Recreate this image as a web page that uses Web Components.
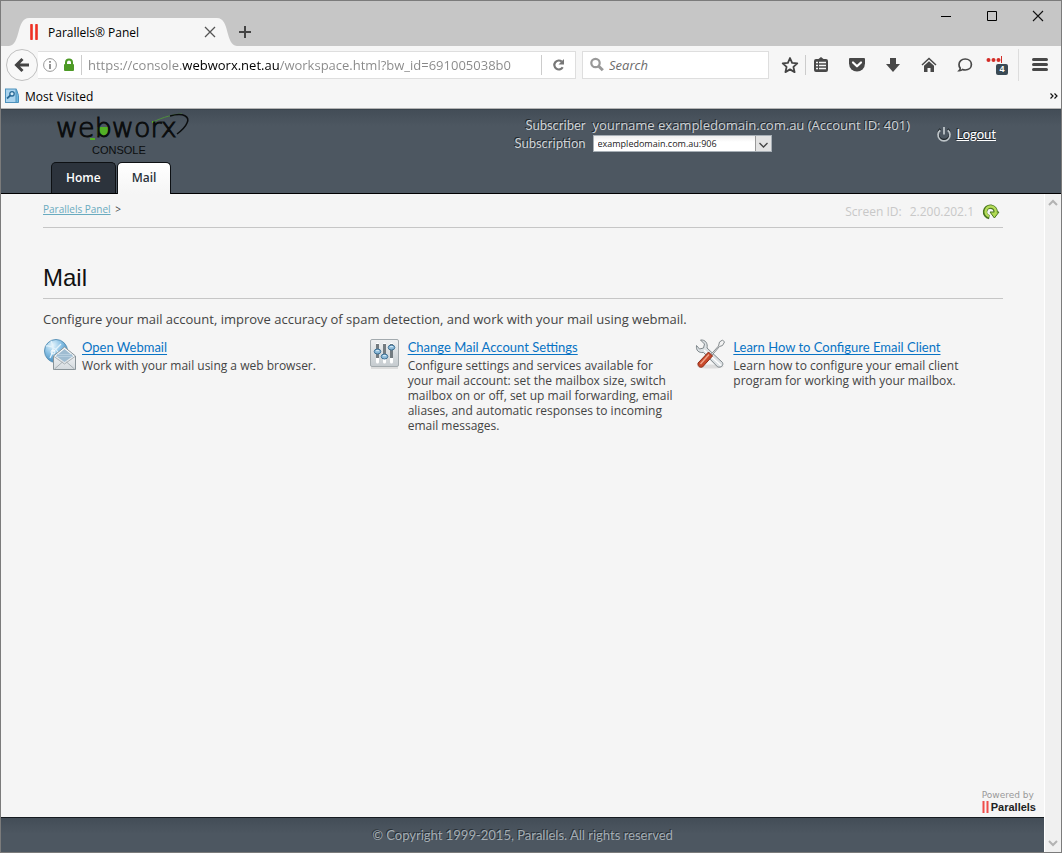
<!DOCTYPE html>
<html lang="en">
<head>
<meta charset="utf-8">
<title>Parallels® Panel</title>
<style>
  body {
    margin: 0;
    --lato: Lato, "Open Sans", sans-serif;
    font-family: "Open Sans", "Noto Sans", sans-serif;
    font-size: 12px;
    color: #444;
    background: #f5f5f5;
  }
</style>
</head>
<body>
<browser-window>
  <browser-tab slot="tabs">Parallels® Panel</browser-tab>
  <panel-header slot="page">
    <nav-tab slot="tabs" href="#home">Home</nav-tab>
    <nav-tab slot="tabs" href="#mail" active>Mail</nav-tab>
  </panel-header>
  <panel-page slot="page">
    <service-card icon="webmail" href="#webmail">
      <span slot="title">Open Webmail</span>
      Work with your mail using a web browser.
    </service-card>
    <service-card icon="sliders" href="#settings">
      <span slot="title">Change Mail Account Settings</span>
      Configure settings and services available for your mail account: set the mailbox size, switch mailbox on or off, set up mail forwarding, email aliases, and automatic responses to incoming email messages.
    </service-card>
    <service-card icon="tools" href="#client">
      <span slot="title">Learn How to Configure Email Client</span>
      Learn how to configure your email client program for working with your mailbox.
    </service-card>
  </panel-page>
</browser-window>

<script>
const icons = {
  minimize: [16, 16, '<path d="M3 8.500h10" stroke="#000"/>'],
  maximize: [16, 16, '<path d="M3.500 3.500h9v9h-9z" fill="none" stroke="#000"/>'],
  close: [16, 16, '<path d="M3 3l10 10M13 3L3 13" stroke="#111" stroke-width="1.100"/>'],
  tabclose: [14, 14, '<path d="M2 2l10 10M12 2L2 12" stroke="#555" stroke-width="1.300"/>'],
  plus: [14, 14, '<path d="M7 1v12M1 7h12" stroke="#444" stroke-width="2"/>'],
  favicon: [10, 16, '<path d="M2.500 1v14M7.500 1v14" stroke="#ee3124" stroke-width="2.600" stroke-linecap="round"/>'],
  back: [16, 16, '<path d="M15 8H3M8.500 2L2.500 8l6 6" fill="none" stroke="#444" stroke-width="3"/>'],
  info: [14, 14, '<circle cx="7" cy="7" r="6.400" fill="none" stroke="#999"/><path d="M7 3v1.800M7 6v5" stroke="#888" stroke-width="1.800"/>'],
  lock: [12, 14, '<path d="M3 7V4.500a3 3 0 0 1 6 0V7" fill="none" stroke="#4d9a26" stroke-width="2"/><rect x="1" y="6" width="10" height="7" rx="1" fill="#4d9a26"/>'],
  reload: [14, 14, '<path d="M10.700 9.300A4.500 4.500 0 1 1 9.800 3.600" fill="none" stroke="#777" stroke-width="2.200"/><path d="M12 1v5.500H6.500z" fill="#777"/>'],
  search: [16, 16, '<circle cx="6.500" cy="6" r="4.200" fill="none" stroke="#999" stroke-width="2.200"/><path d="M9.500 9l4.300 4.300" stroke="#999" stroke-width="3"/>'],
  star: [18, 18, '<path d="M9 2l2.100 4.900 5.200.5-3.900 3.500 1.200 5.200L9 13.400l-4.600 2.700 1.200-5.200-3.900-3.500 5.200-.5z" fill="none" stroke="#444" stroke-width="1.800" stroke-linejoin="round"/>'],
  list: [16, 16, '<path d="M5.500 2L8 0l2.500 2H13a2 2 0 0 1 2 2v9a2 2 0 0 1-2 2H3a2 2 0 0 1-2-2V4a2 2 0 0 1 2-2z" fill="#484848"/><path d="M3 5.500h2M6 5.500h7M3 8.500h2M6 8.500h7M3 11.500h2M6 11.500h7" stroke="#f6f6f6" stroke-width="1.300"/>'],
  pocket: [18, 16, '<path d="M2 1h14a1 1 0 0 1 1 1v4.500a8 8 0 0 1-16 0V2a1 1 0 0 1 1-1z" fill="#484848"/><path d="M5 5.500l4 3.800 4-3.800" fill="none" stroke="#fff" stroke-width="2.200" stroke-linecap="round" stroke-linejoin="round"/>'],
  download: [16, 16, '<path d="M5 1h6v6h4l-7 8-7-8h4z" fill="#484848"/>'],
  home: [16, 16, '<path d="M1 8l7-6.500L15 8" fill="none" stroke="#484848" stroke-width="1.500"/><path d="M3 8.800L8 4.300l5 4.500V15H9.500v-4h-3v4H3z" fill="#484848"/>'],
  chat: [16, 16, '<path d="M8.200 2c3.600 0 6.200 2.400 6.200 5.500S11.800 13 8.200 13c-1 0-1.900-.2-2.700-.5-.9.900-2 1.200-3.300 1.200.7-.7 1.100-1.500 1-2.600A5 5 0 0 1 2 7.500C2 4.400 4.600 2 8.200 2z" fill="none" stroke="#484848" stroke-width="1.700"/>'],
  menu: [18, 16, '<path d="M2.500 2.500h13M2.500 7.500h13M2.500 12.500h13" stroke="#484848" stroke-width="3" stroke-linecap="round"/>'],
  dots: [22, 22, '<circle cx="2.500" cy="6" r="2" fill="#d32d27"/><circle cx="7.500" cy="6" r="2" fill="#d32d27"/><circle cx="12.500" cy="6" r="2" fill="#d32d27"/><path d="M15.500 2v7" stroke="#d32d27"/>'],
  bookmark: [16, 16, '<path d="M3 1.500h9.500l2 6v7H4z" fill="#70b8df" stroke="#4b91bd"/><rect x="1.500" y="1" width="10.500" height="13.500" fill="#a9d3ee" stroke="#4d91bc"/><circle cx="8" cy="5.800" r="2.200" fill="#d3ebf8" stroke="#276895" stroke-width="1.300"/><path d="M6.300 7.500L3 10.500" stroke="#276895" stroke-width="1.700"/>'],
  more: [8, 8, '<path d="M.5 1.500L3 4 .5 6.500M4.500 1.500L7 4 4.500 6.500" fill="none" stroke="#111" stroke-width="1.200"/>'],
  power: [16, 16, '<path d="M4.300 3.200a6 6 0 1 0 7.400 0" fill="none" stroke="#1d2429" stroke-width="2.200"/><path d="M4.300 4.200a6 6 0 1 0 7.400 0M8 1v7.500" fill="none" stroke="#bdc4c8" stroke-width="1.800"/>'],
  refresh: [18, 18, '<path d="M7.400 14.200A5.300 5.300 0 1 1 13.600 9.500" fill="none" stroke="#47741f" stroke-width="4.400"/><path d="M8 9h9l-4.600 6z" fill="#b0da52" stroke="#47741f"/><path d="M6.900 13.400A5.100 5.100 0 1 1 13.400 10.500" fill="none" stroke="#b5dc59" stroke-width="2.400"/>'],
  chevron: [15, 15, '<path d="M3.500 7l4 4 4-4" fill="none" stroke="#444" stroke-width="1.300"/>'],
  up: [10, 10, '<path d="M1 7l4-4 4 4" fill="none" stroke="#b3b3b3" stroke-width="2"/>'],
  down: [10, 10, '<path d="M1 3l4 4 4-4" fill="none" stroke="#b3b3b3" stroke-width="2"/>'],
  parallels: [8, 12, '<path d="M1.500 0v12M5.500 0v12" stroke="#ef4d4a" stroke-width="2"/>'],
  webmail: [34, 34, `
    <defs>
      <radialGradient id="g" cx=".35" cy=".25" r=".8"><stop offset="0" stop-color="#e7f6fd"/><stop offset=".5" stop-color="#86bfe4"/><stop offset="1" stop-color="#3e85b8"/></radialGradient>
      <linearGradient id="e" x2="0" y2="1"><stop offset="0" stop-color="#fff"/><stop offset="1" stop-color="#d4dade"/></linearGradient>
    </defs>
    <circle cx="13" cy="13" r="11.500" fill="url(#g)" stroke="#5d94b8"/>
    <path d="M3 8c6-1 13 4 14 12M8 3c3 5 3 10-1 17M10 14l8-8" fill="none" stroke="#e4f3fb" stroke-width="1.200"/>
    <circle cx="10" cy="14" r="2" fill="none" stroke="#fff"/>
    <path d="M10.500 18L21.500 9l11 9v13.500h-22z" fill="url(#e)" stroke="#8a9499"/>
    <path d="M13 18l8.500-7 8.500 7-8.500 6z" fill="#9fbcd1"/>
    <path d="M14 16.500h15M13 18.500h17" stroke="#b6cedf"/>
    <path d="M11 18.500l10.500 7.500L32 18.500M11.500 31l8-7M31.500 31l-8-7" fill="none" stroke="#a8b0b5"/>`],
  sliders: [34, 34, `
    <defs>
      <linearGradient id="p" x2="0" y2="1"><stop offset="0" stop-color="#eff1f2"/><stop offset="1" stop-color="#c5cbcf"/></linearGradient>
    </defs>
    <path d="M2 30h27" stroke="#ddd" stroke-width="2"/>
    <rect x="1.500" y="1.500" width="28" height="27" rx="1.500" fill="url(#p)" stroke="#a3aaae"/>
    <path d="M8.500 6v18M15.500 6v18M22.500 6v18" stroke="#fff" stroke-width="3" stroke-linecap="round"/>
    <path d="M8.500 6v14M15.500 6v14M22.500 6v14" stroke="#737b80" stroke-width="3"/>
    <g fill="#8bb9d8" stroke="#3f7296"><ellipse cx="8.500" cy="13.500" rx="3.300" ry="2.500"/><ellipse cx="15.500" cy="18.500" rx="3.300" ry="2.500"/><ellipse cx="22.500" cy="9.500" rx="3.300" ry="2.500"/></g>
    <path d="M7 12.700h3M14 17.700h3M21 8.700h3" stroke="#dff0fa"/>`],
  tools: [34, 34, `
    <g transform="translate(1.500 1)">
    <ellipse cx="15" cy="27.500" rx="13" ry="2" fill="#ddd"/>
    <path d="M5 1l4 4-1 4-4 1-3-3.500c-.6 5 2 7.500 7 7l14 14.300c3 1.200 6.500-1 5-4.300L11.500 9C12.500 4.500 10 .5 5 1z" fill="#dce1e4" stroke="#7f878b"/>
    <path d="M8.500 11l17 15.500" stroke="#fff" stroke-width="1.300"/>
    <path d="M14 17L23 7l1-4 3-2 2 2-2 3.500-3 1L15 18z" fill="#f3f3f3" stroke="#858b8e"/>
    <path d="M13 13l4 4L7 28c-3 1-5-1-4.500-4z" fill="#c8492a" stroke="#8d2f1c"/>
    <path d="M13.500 15.500L5 25" stroke="#efa38a" stroke-width="1.500"/>
    </g>`]
};

class UiIcon extends HTMLElement {
  connectedCallback() {
    const [w, h, shape] = icons[this.getAttribute('name')];
    this.attachShadow({ mode: 'open' }).innerHTML = `
      <style>
        :host { display: block; flex: none; line-height: 0; }
        svg { display: block; }
      </style>
      <svg width="${w}" height="${h}" viewBox="0 0 ${w} ${h}" aria-hidden="true">${shape}</svg>
    `;
  }
}
customElements.define('ui-icon', UiIcon);

class BrowserTab extends HTMLElement {
  constructor() {
    super();
    this.attachShadow({ mode: 'open' }).innerHTML = `
      <style>
        :host { display: flex; align-self: flex-end; height: 28px; }
        .edge { display: block; flex: none; fill: #f6f6f6; }
        .body {
          display: flex;
          align-items: center;
          width: 188px;
          background: #f6f6f6;
          color: #000;
        }
        .label { flex: 1; margin-left: 9px; }
        button { border: 0; padding: 0; background: none; }
      </style>
      <svg class="edge" width="20" height="28"><path d="M0 28C12 27 7 0 20 0v28z"/></svg>
      <div class="body">
        <ui-icon name="favicon"></ui-icon>
        <span class="label"><slot></slot></span>
        <button aria-label="Close tab"><ui-icon name="tabclose"></ui-icon></button>
      </div>
      <svg class="edge" width="20" height="28"><path d="M0 0c13 0 8 27 20 28H0z"/></svg>
    `;
  }
}
customElements.define('browser-tab', BrowserTab);

class BrowserToolbar extends HTMLElement {
  constructor() {
    super();
    this.attachShadow({ mode: 'open' }).innerHTML = `
      <style>
        :host {
          display: flex;
          align-items: center;
          height: 38px;
          padding-left: 5px;
          background: #f6f6f6;
        }
        button {
          display: flex;
          align-items: center;
          justify-content: center;
          width: 36px;
          height: 32px;
          flex: none;
          border: 0;
          padding: 0;
          background: none;
        }
        .back {
          width: 32px;
          border: 1px solid #c0c0c0;
          border-radius: 50%;
          background: #f8f8f8;
        }
        .box {
          display: flex;
          align-items: center;
          box-sizing: border-box;
          height: 28px;
          min-width: 0;
          border: 1px solid #dedede;
          background: #fff;
        }
        .url { flex: 1; gap: 6px; padding-left: 5px; border-left: 0; }
        .find { flex: 0 1 187px; margin-left: 6px; padding-left: 6px; gap: 4px; }
        input {
          min-width: 0;
          flex: 1;
          border: 0;
          padding: 0;
          outline: 0;
          background: none;
          font: 13px "Open Sans", "Noto Sans", sans-serif;
          color: #000;
        }
        .address {
          background: linear-gradient(90deg, #888 94px, #000 94px 192px, #888 192px);
          -webkit-background-clip: text;
          background-clip: text;
          -webkit-text-fill-color: transparent;
        }
        .find input::placeholder { color: #6c6c6c; font-style: italic; }
        .line { flex: none; width: 1px; height: 20px; background: #ccc; }
        .line.tall { height: 32px; margin-left: 7px; background: #ddd; }
        .url .reload { width: 33px; height: 26px; margin-left: -6px; }
        .star { width: 30px; margin-left: 6px; }
        .list { width: 30px; margin-right: 3px; }
        .menu { width: 42px; }
        .pass { width: 28px; position: relative; }
        .count {
          position: absolute;
          right: 3px;
          bottom: 6px;
          width: 12px;
          border-radius: 2px;
          background: #3a4a55;
          color: #fff;
          font: bold 9px/11px "Liberation Sans", sans-serif;
        }
      </style>
      <button class="back" aria-label="Back"><ui-icon name="back"></ui-icon></button>
      <div class="box url">
        <ui-icon name="info"></ui-icon>
        <ui-icon name="lock"></ui-icon>
        <span class="line"></span>
        <input class="address" aria-label="Address" value="https://console.webworx.net.au/workspace.html?bw_id=691005038b0">
        <span class="line"></span>
        <button class="reload" aria-label="Reload"><ui-icon name="reload"></ui-icon></button>
      </div>
      <div class="box find">
        <ui-icon name="search"></ui-icon>
        <input type="text" aria-label="Search" placeholder="Search">
      </div>
      <button class="star" aria-label="Bookmark this page"><ui-icon name="star"></ui-icon></button>
      <span class="line"></span>
      <button class="list" aria-label="Bookmarks"><ui-icon name="list"></ui-icon></button>
      <button aria-label="Pocket"><ui-icon name="pocket"></ui-icon></button>
      <button aria-label="Downloads"><ui-icon name="download"></ui-icon></button>
      <button aria-label="Home page"><ui-icon name="home"></ui-icon></button>
      <button aria-label="Chat"><ui-icon name="chat"></ui-icon></button>
      <button class="pass" aria-label="Passwords"><ui-icon name="dots"></ui-icon><span class="count">4</span></button>
      <span class="line tall"></span>
      <button class="menu" aria-label="Menu"><ui-icon name="menu"></ui-icon></button>
    `;
  }
}
customElements.define('browser-toolbar', BrowserToolbar);

class BrowserWindow extends HTMLElement {
  constructor() {
    super();
    this.attachShadow({ mode: 'open' }).innerHTML = `
      <style>
        :host {
          display: flex;
          flex-direction: column;
          box-sizing: border-box;
          min-height: 100vh;
          border: 1px solid #7b7b7b;
        }
        .titlebar { display: flex; height: 45px; background: #c6c6c6; padding-left: 8px; }
        .new { align-self: flex-end; height: 28px; padding: 0 0 0 1px; }
        .controls { display: flex; margin-left: auto; }
        button { border: 0; padding: 0; background: none; }
        .controls button { display: flex; justify-content: center; align-items: center; width: 46px; height: 30px; }
        .bookmarks {
          display: flex;
          align-items: center;
          height: 24px;
          padding: 0 3px;
          border-bottom: 1px solid #b4b4b4;
          background: #f6f6f6;
          color: #000;
        }
        .bookmarks button { display: flex; align-items: center; gap: 5px; font: inherit; color: #000; }
        .bookmarks .more { margin-left: auto; }
        .view { flex: 1; display: flex; flex-direction: column; }
      </style>
      <div class="titlebar">
        <slot name="tabs"></slot>
        <button class="new" aria-label="New tab"><ui-icon name="plus"></ui-icon></button>
        <div class="controls">
          <button aria-label="Minimize"><ui-icon name="minimize"></ui-icon></button>
          <button aria-label="Maximize"><ui-icon name="maximize"></ui-icon></button>
          <button aria-label="Close"><ui-icon name="close"></ui-icon></button>
        </div>
      </div>
      <browser-toolbar></browser-toolbar>
      <div class="bookmarks">
        <button><ui-icon name="bookmark"></ui-icon>Most Visited</button>
        <button class="more" aria-label="More bookmarks"><ui-icon name="more"></ui-icon></button>
      </div>
      <div class="view"><slot name="page"></slot></div>
    `;
  }
}
customElements.define('browser-window', BrowserWindow);

class WebworxLogo extends HTMLElement {
  constructor() {
    super();
    this.attachShadow({ mode: 'open' }).innerHTML = `
      <style>
        :host { display: block; }
        svg { display: block; }
        text { fill: #0b0d0e; }
        .name { font: 200 27px "DejaVu Sans", sans-serif; stroke: #0b0d0e; stroke-width: 1px; }
        .sub { font: 11px "Liberation Sans", sans-serif; }
      </style>
      <svg width="136" height="48" viewBox="0 -4 136 48" role="img" aria-label="webworx console">
        <path d="M41 13h11v9H41zM34 24h5v2h-5zM96 7h3v2h-3z" fill="#53b026"/>
        <path d="M97 8C107 3 119 0 126 0" fill="none" stroke="#4f8f3d"/>
        <path d="M114 2c14-4 20 1 17 7-2 5-6 8-10 11" fill="none" stroke="#0b0d0e" stroke-width="1.500"/>
        <text class="name" x="0" y="23">webworx</text>
        <text class="sub" x="36" y="40">CONSOLE</text>
      </svg>
    `;
  }
}
customElements.define('webworx-logo', WebworxLogo);

class NavTab extends HTMLElement {
  connectedCallback() {
    this.attachShadow({ mode: 'open' }).innerHTML = `
      <style>
        :host { display: block; }
        a {
          display: block;
          padding: 0 14px;
          border: 1px solid #0d1013;
          border-bottom: 0;
          border-radius: 5px 5px 0 0;
          background: #2c333c;
          color: #fff;
          font: 600 12px/30px "Open Sans", "Noto Sans", sans-serif;
          text-decoration: none;
        }
        :host([active]) { margin-bottom: -1px; }
        :host([active]) a {
          padding-bottom: 1px;
          background: linear-gradient(#fff, #f5f5f5);
          color: #2c333c;
        }
      </style>
      <a href="${this.getAttribute('href')}"><slot></slot></a>
    `;
  }
}
customElements.define('nav-tab', NavTab);

class PanelHeader extends HTMLElement {
  constructor() {
    super();
    this.attachShadow({ mode: 'open' }).innerHTML = `
      <style>
        :host {
          display: flex;
          justify-content: space-between;
          height: 83px;
          padding: 0 65px 0 50px;
          border-top: 1px solid #3b444d;
          border-bottom: 1px solid #000;
          background: linear-gradient(#434d57, #4d5761 16px);
          color: #ced2d5;
          font-size: 13px;
        }
        .left { display: flex; flex-direction: column; justify-content: space-between; }
        webworx-logo { padding-left: 5px; }
        nav { display: flex; gap: 1px; }
        .right { display: flex; gap: 19px; padding-top: 6px; text-shadow: -1px -1px #20262b; }
        .account { display: grid; grid-template-columns: auto minmax(324px, auto); gap: 0 7px; align-content: start; line-height: 18px; }
        .key { text-align: right; font-family: var(--lato); }
        .value { font-weight: 500; }
        .pick { display: grid; width: 179px; height: 17px; margin-top: 1px; box-sizing: border-box; border: 1px solid #a7afb6; }
        .pick > * { grid-area: 1 / 1; }
        select {
          appearance: none;
          border: 0;
          border-radius: 0;
          padding: 0 20px 0 4px;
          background: linear-gradient(#eee, #fff 6px);
          font: 9px "Open Sans", sans-serif;
          color: #222;
          min-width: 0;
        }
        .arrow { justify-self: end; background: #e3e3e3; border-left: 1px solid #999; pointer-events: none; }
        .logout { display: flex; align-items: center; gap: 5px; height: 36px; color: #fff; font-family: var(--lato); }
        .logout a { color: inherit; }
      </style>
      <div class="left">
        <webworx-logo></webworx-logo>
        <nav><slot name="tabs"></slot></nav>
      </div>
      <div class="right">
        <div class="account">
          <span class="key">Subscriber</span>
          <span class="value">yourname exampledomain.com.au (Account ID: 401)</span>
          <label class="key" for="subscription">Subscription</label>
          <span class="pick">
            <select id="subscription"><option>exampledomain.com.au:906</option></select>
            <ui-icon class="arrow" name="chevron"></ui-icon>
          </span>
        </div>
        <div class="logout"><ui-icon name="power"></ui-icon><a href="#logout">Logout</a></div>
      </div>
    `;
  }
}
customElements.define('panel-header', PanelHeader);

class ServiceCard extends HTMLElement {
  connectedCallback() {
    this.attachShadow({ mode: 'open' }).innerHTML = `
      <style>
        :host { display: flex; gap: 5px; }
        .text { flex: 1; font-size: 12px; line-height: 15px; }
        a { display: block; width: fit-content; color: #0873c4; font: 13px/18px var(--lato); text-underline-offset: 2px; }
        p { margin: 2px 0 0; }
      </style>
      <ui-icon name="${this.getAttribute('icon')}"></ui-icon>
      <div class="text">
        <a href="${this.getAttribute('href')}"><slot name="title"></slot></a>
        <p><slot></slot></p>
      </div>
    `;
  }
}
customElements.define('service-card', ServiceCard);

class PanelPage extends HTMLElement {
  constructor() {
    super();
    this.attachShadow({ mode: 'open' }).innerHTML = `
      <style>
        :host { display: flex; flex: 1; background: #f5f5f5; }
        .column { flex: 1; display: flex; flex-direction: column; }
        main { flex: 1; padding: 0 41px 0 42px; }
        .path {
          display: flex;
          justify-content: space-between;
          align-items: center;
          height: 33px;
          border-bottom: 1px solid #c6c6c6;
        }
        .crumbs { font-size: 10px; line-height: 16px; padding-bottom: 3px; }
        .crumbs a { color: #6aabbf; margin-right: 2px; }
        .screen { display: flex; align-items: center; gap: 8px; padding: 2px 3px 0 0; color: #c8c8c8; }
        h1 {
          margin: 34px 0 11px;
          padding-bottom: 4px;
          border-bottom: 1px solid #c6c6c6;
          color: #111;
          font: 24px/32px "Liberation Sans", sans-serif;
        }
        .intro { margin: 0 0 10px; font-size: 13px; line-height: 18px; }
        .cards { display: grid; grid-template-columns: repeat(3, 1fr); gap: 17px; }
        .powered {
          align-self: flex-end;
          padding: 0 8px 4px 0;
          color: #999;
          font: 9px/11px "DejaVu Sans", sans-serif;
        }
        .brand { display: flex; align-items: center; gap: 1px; color: #222; font: bold 11px/12px "Liberation Sans", sans-serif; }
        footer {
          border-top: 1px solid #161b20;
          background: linear-gradient(#434d57, #4d5761 16px);
          color: #a4adb3;
          text-align: center;
          text-shadow: -1px -1px #272e34;
          font: 13px/34px var(--lato);
        }
        .scroll {
          display: flex;
          flex-direction: column;
          justify-content: space-between;
          align-items: center;
          width: 17px;
          padding: 4px 0;
          box-sizing: border-box;
          border-left: 1px solid #fff;
          background: #f0f0f0;
        }
      </style>
      <div class="column">
        <main>
          <div class="path">
            <nav class="crumbs"><a href="#panel">Parallels Panel</a> &gt;</nav>
            <div class="screen"><span>Screen ID:</span><span>2.200.202.1</span><ui-icon name="refresh"></ui-icon></div>
          </div>
          <h1>Mail</h1>
          <p class="intro">Configure your mail account, improve accuracy of spam detection, and work with your mail using webmail.</p>
          <div class="cards"><slot></slot></div>
        </main>
        <div class="powered">
          <div>Powered by</div>
          <div class="brand"><ui-icon name="parallels"></ui-icon><span>Parallels</span></div>
        </div>
        <footer>© Copyright 1999-2015, Parallels. All rights reserved</footer>
      </div>
      <div class="scroll"><ui-icon name="up"></ui-icon><ui-icon name="down"></ui-icon></div>
    `;
  }
}
customElements.define('panel-page', PanelPage);
</script>
</body>
</html>
